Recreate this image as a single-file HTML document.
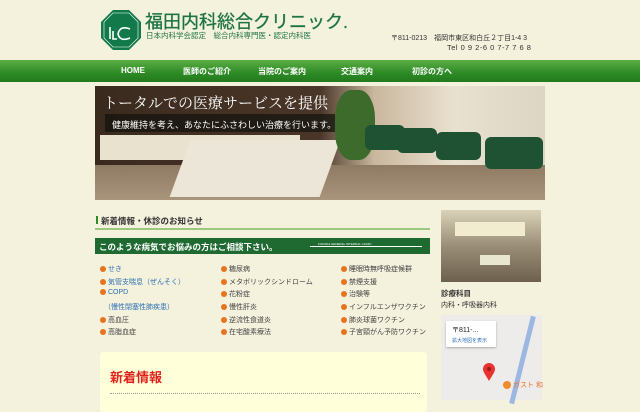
<!DOCTYPE html><html><head><meta charset="utf-8"><style>
*{margin:0;padding:0;box-sizing:border-box}
body{width:640px;height:400px;overflow:hidden;background:#f4f1dc;font-family:"Liberation Sans","Noto Sans CJK JP",sans-serif;position:relative}
.a{position:absolute;white-space:nowrap}
.nav{position:absolute;left:0;top:60px;width:640px;height:22px;background:linear-gradient(#5cae45,#2d8a25 60%,#237a1d);}
.nav span{position:absolute;top:6px;color:#fff;font-size:8px;font-weight:bold;transform:translateX(-50%)}
.li{position:absolute;font-size:7px;color:#444}
.li b{display:inline-block;width:6px;height:6px;border-radius:50%;background:#e8731e;margin-right:2px;vertical-align:-1px}
.bl{color:#2b6fb5}
</style></head><body>
<svg class="a" style="left:100px;top:9px" width="42" height="42" viewBox="0 0 42 42"><polygon points="13,1 29,1 41,13 41,29 29,41 13,41 1,29 1,13" fill="#127a4a"/><polygon points="13,4 29,4 38,13 38,29 29,38 13,38 4,29 4,13" fill="none" stroke="#fff" stroke-width=".6"/><path d="M10 18v12M13 22v8h4M30 20q-10-4-12 5q2 8 12 4" fill="none" stroke="#fff" stroke-width="1.6"/></svg>
<div class="a" style="left:145px;top:8px;font-size:18px;color:#1d7444;-webkit-text-stroke:.3px #1d7444">福田内科総合クリニック.</div>
<div class="a" style="left:146px;top:30px;font-size:7.5px;color:#1d7444">日本内科学会認定　総合内科専門医・認定内科医</div>
<div class="a" style="left:391px;top:33px;font-size:7px;color:#333">〒811-0213　福岡市東区和白丘２丁目1-4 3</div>
<div class="a" style="left:447px;top:43px;font-size:7.5px;color:#333;letter-spacing:.5px">Tel 0 9 2-6 0 7-7 7 6 8</div>
<div class="nav"><span style="left:133px">HOME</span><span style="left:207px">医師のご紹介</span><span style="left:282px">当院のご案内</span><span style="left:357px">交通案内</span><span style="left:432px">初診の方へ</span></div>
<div class="a" style="left:95px;top:86px;width:450px;height:114px;background:linear-gradient(90deg,#3a2a1e 0%,#4a3628 50%,#c9b79e 62%,#e9e1d0 80%,#ddd5c4 100%)"></div>
<div class="a" style="left:95px;top:165px;width:450px;height:35px;background:linear-gradient(#8f7a63,#a8957c)"></div>
<div class="a" style="left:100px;top:135px;width:200px;height:25px;background:#e9e2cf"></div>
<div class="a" style="left:180px;top:140px;width:150px;height:57px;background:#ebe6d7;transform:skewX(-20deg)"></div>
<div class="a" style="left:335px;top:90px;width:40px;height:70px;background:#3d6b2c;border-radius:40%"></div>
<div class="a" style="left:365px;top:125px;width:40px;height:25px;background:#1e5233;border-radius:6px"></div>
<div class="a" style="left:397px;top:128px;width:40px;height:25px;background:#1e5233;border-radius:6px"></div>
<div class="a" style="left:436px;top:132px;width:45px;height:28px;background:#1e5233;border-radius:6px"></div>
<div class="a" style="left:485px;top:137px;width:58px;height:32px;background:#1e5233;border-radius:6px"></div>
<div class="a" style="left:103px;top:92px;font-family:'Liberation Serif','Noto Serif CJK SC',serif;font-size:15px;color:#fff">トータルでの医療サービスを提供</div>
<div class="a" style="left:105px;top:114px;width:230px;height:18px;background:rgba(20,20,15,.75)"></div>
<div class="a" style="left:112px;top:118px;font-size:9px;color:#fff">健康維持を考え、あなたにふさわしい治療を行います。</div>
<div class="a" style="left:96px;top:216px;width:2px;height:8px;background:#2d8a25"></div>
<div class="a" style="left:101px;top:215px;font-size:8.5px;font-weight:bold;color:#333">新着情報・休診のお知らせ</div>
<div class="a" style="left:95px;top:228px;width:335px;height:2px;background:#9cc77e"></div>
<div class="a" style="left:95px;top:238px;width:335px;height:16px;background:#1e6a30"></div>
<div class="a" style="left:99px;top:241px;font-size:8.5px;font-weight:bold;color:#fff">このような病気でお悩みの方はご相談下さい。</div>
<div class="a" style="left:310px;top:246px;width:112px;height:1px;background:#fff"></div>
<div class="a" style="left:318px;top:242px;font-size:3px;color:#fff">FUKUDA GENERAL INTERNAL CLINIC</div>
<div class="li bl" style="left:100px;top:264px"><b></b>せき</div>
<div class="li bl" style="left:100px;top:277px"><b></b>気管支喘息（ぜんそく）</div>
<div class="li bl" style="left:100px;top:289px"><b></b>COPD</div>
<div class="li bl" style="left:104px;top:302px">（慢性閉塞性肺疾患）</div>
<div class="li" style="left:100px;top:315px"><b></b>高血圧</div>
<div class="li" style="left:100px;top:327px"><b></b>高脂血症</div>
<div class="li" style="left:221px;top:264px"><b></b>糖尿病</div>
<div class="li" style="left:221px;top:277px"><b></b>メタボリックシンドローム</div>
<div class="li" style="left:221px;top:289px"><b></b>花粉症</div>
<div class="li" style="left:221px;top:302px"><b></b>慢性肝炎</div>
<div class="li" style="left:221px;top:315px"><b></b>逆流性食道炎</div>
<div class="li" style="left:221px;top:327px"><b></b>在宅酸素療法</div>
<div class="li" style="left:341px;top:264px"><b></b>睡眠時無呼吸症候群</div>
<div class="li" style="left:341px;top:277px"><b></b>禁煙支援</div>
<div class="li" style="left:341px;top:289px"><b></b>治験等</div>
<div class="li" style="left:341px;top:302px"><b></b>インフルエンザワクチン</div>
<div class="li" style="left:341px;top:315px"><b></b>肺炎球菌ワクチン</div>
<div class="li" style="left:341px;top:327px"><b></b>子宮頸がん予防ワクチン</div>
<div class="a" style="left:100px;top:352px;width:327px;height:60px;background:#ffffd9;border-radius:3px"></div>
<div class="a" style="left:110px;top:367px;font-size:13px;font-weight:bold;color:#e0201a">新着情報</div>
<div class="a" style="left:110px;top:393px;width:310px;border-top:1px dotted #999"></div>
<div class="a" style="left:441px;top:210px;width:100px;height:72px;background:linear-gradient(#d9d2b8,#9a8e78 50%,#6d604e)"></div>
<div class="a" style="left:455px;top:222px;width:70px;height:14px;background:#f1ebd0"></div>
<div class="a" style="left:480px;top:255px;width:30px;height:10px;background:#e8e6cf"></div>
<div class="a" style="left:441px;top:288px;font-size:7.5px;font-weight:bold;color:#333">診療科目</div>
<div class="a" style="left:441px;top:300px;font-size:7px;color:#333">内科・呼吸器内科</div>
<div class="a" style="left:441px;top:315px;width:101px;height:85px;background:#eeecea"></div>
<div class="a" style="left:520px;top:315px;width:5px;height:90px;background:#9cb8e0;transform:rotate(14deg)"></div>
<div class="a" style="left:446px;top:321px;width:50px;height:26px;background:#fff;box-shadow:0 1px 2px #aaa"></div>
<div class="a" style="left:452px;top:325px;font-size:7px;color:#222">〒811-...</div>
<div class="a" style="left:452px;top:337px;font-size:5px;color:#2b6fb5">拡大地図を表示</div>
<svg class="a" style="left:482px;top:362px" width="14" height="20"><path d="M7 19C3 12 1 10 1 7a6 6 0 0 1 12 0c0 3-2 5-6 12z" fill="#e8322f"/><circle cx="7" cy="7" r="2" fill="#9b1a17"/></svg>
<div class="a" style="left:503px;top:381px;width:8px;height:8px;border-radius:50%;background:#f08a2c"></div>
<div class="a" style="left:513px;top:380px;font-size:7px;color:#e8732b">ガスト 和</div>
</body></html>
